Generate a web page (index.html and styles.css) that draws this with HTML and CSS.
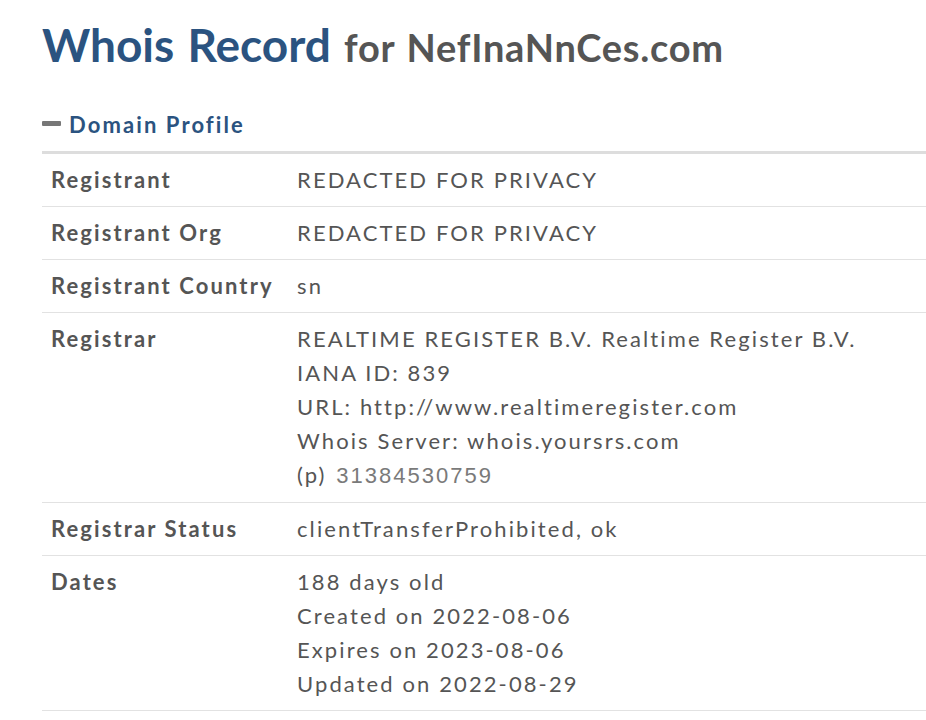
FILE: index.html
```html
<!DOCTYPE html>
<html lang="en">
<head>
    <meta charset="UTF-8">
    <meta name="viewport" content="width=device-width, initial-scale=1.0">
    <title>Whois Record for NefInaNnCes.com</title>
    <link rel="stylesheet" href="styles.css">
</head>
<body>
    <div class="page">
        <h1 class="title">Whois Record <span class="title-domain">for NefInaNnCes.com</span></h1>

        <!-- Domain Profile -->
        <h2 class="section-head"><span class="toggle"></span>Domain Profile</h2>
        <table class="profile">
            <tr>
                <th>Registrant</th>
                <td>REDACTED FOR PRIVACY</td>
            </tr>
            <tr>
                <th>Registrant Org</th>
                <td>REDACTED FOR PRIVACY</td>
            </tr>
            <tr>
                <th>Registrant Country</th>
                <td>sn</td>
            </tr>
            <tr>
                <th>Registrar</th>
                <td>
                    REALTIME REGISTER B.V. Realtime Register B.V.<br>
                    IANA ID: 839<br>
                    URL: http://www.realtimeregister.com<br>
                    Whois Server: whois.yoursrs.com<br>
                    <span class="phone-label">(p)</span> <span class="phone">31384530759</span>
                </td>
            </tr>
            <tr>
                <th>Registrar Status</th>
                <td>clientTransferProhibited, ok</td>
            </tr>
            <tr>
                <th>Dates</th>
                <td>
                    188 days old<br>
                    Created on 2022-08-06<br>
                    Expires on 2023-08-06<br>
                    Updated on 2022-08-29
                </td>
            </tr>
        </table>
    </div>
</body>
</html>
```

FILE: styles.css
```css
/* General Reset */
* {
    margin: 0;
    padding: 0;
    box-sizing: border-box;
}

body {
    background: #fff;
    color: #555;
    font-family: 'Lato', 'Open Sans', sans-serif;
    overflow: hidden;
}

.page {
    padding: 16px 0 0 42px;
}

/* Title */
.title {
    font-size: 46px;
    font-weight: 700;
    color: #2b5380;
    line-height: 58px;
    word-spacing: 2px;
}

.title-domain {
    font-size: 38px;
    color: #555;
    letter-spacing: 0.75px;
}

/* Section heading */
.section-head {
    display: flex;
    align-items: center;
    margin-top: 35px;
    font-size: 22px;
    font-weight: 700;
    color: #2b5380;
    line-height: 28px;
    letter-spacing: 2.1px;
}

.toggle {
    display: inline-block;
    width: 19px;
    height: 5px;
    background: #777;
    border-radius: 1px;
    margin-right: 8px;
    margin-top: -4px;
}

/* Profile table */
.profile {
    width: 884px;
    margin-top: 12px;
    border-collapse: collapse;
    border-top: 3px solid #ddd;
    font-size: 22px;
    line-height: 34px;
    letter-spacing: 2.1px;
}

.profile tr {
    border-bottom: 1px solid #e2e2e2;
}

.profile th,
.profile td {
    text-align: left;
    vertical-align: top;
    padding: 9px 0 9px 0;
}

.profile th {
    width: 255px;
    padding-left: 9px;
    font-weight: 700;
    color: #555;
}

.profile td {
    font-weight: 400;
    color: #555;
}

.phone-label {
    margin-right: 2px;
}

.phone {
    font-family: 'Liberation Sans', Arial, sans-serif;
    color: #7a7a7a;
    letter-spacing: 2px;
}
```
